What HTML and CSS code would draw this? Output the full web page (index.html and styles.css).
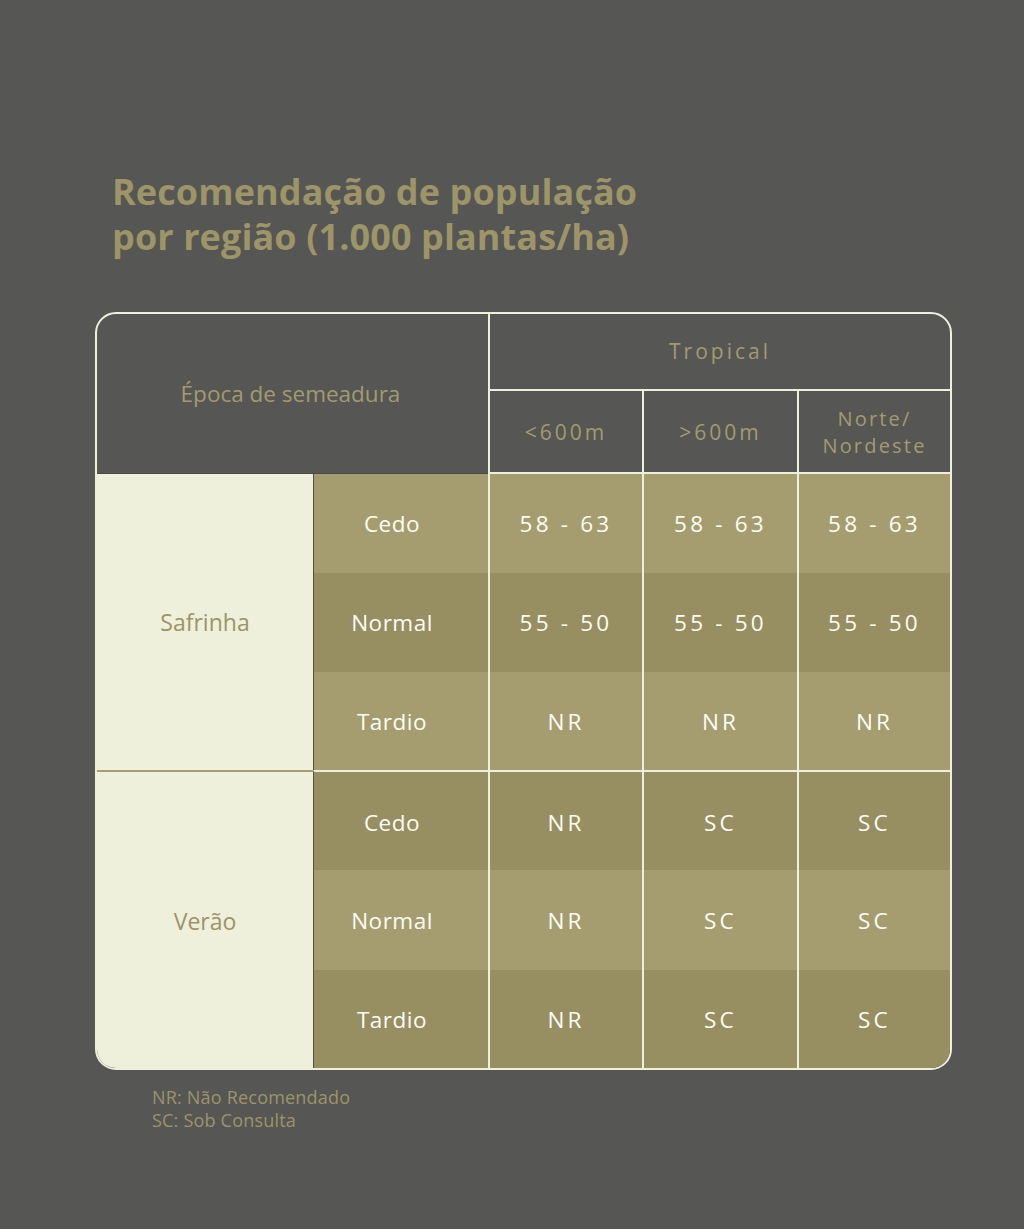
FILE: index.html
```html
<!DOCTYPE html>
<html lang="pt">
<head>
<meta charset="utf-8">
<title>Recomendação de população por região</title>
<link rel="stylesheet" href="styles.css">
</head>
<body>
<main class="page">
  <h1 class="title">Recomendação de população<br>por região (1.000 plantas/ha)</h1>

  <div class="table">
    <div class="hd hd-epoca">Época de semeadura</div>
    <div class="hd hd-trop">Tropical</div>
    <div class="hd hd-sub hd-c1">&lt;600m</div>
    <div class="hd hd-sub hd-c2">&gt;600m</div>
    <div class="hd hd-sub hd-c3"><span class="ln">Norte/</span><span class="ln">Nordeste</span></div>

    <div class="group g1">Safrinha</div>
    <div class="season light r1">Cedo</div>
    <div class="cell light r1">58 - 63</div>
    <div class="cell light r1">58 - 63</div>
    <div class="cell light r1">58 - 63</div>

    <div class="season dark r2">Normal</div>
    <div class="cell dark r2">55 - 50</div>
    <div class="cell dark r2">55 - 50</div>
    <div class="cell dark r2">55 - 50</div>

    <div class="season light r3">Tardio</div>
    <div class="cell light r3">NR</div>
    <div class="cell light r3">NR</div>
    <div class="cell light r3">NR</div>

    <div class="group g2">Verão</div>
    <div class="season dark r4 sep">Cedo</div>
    <div class="cell dark r4 sep">NR</div>
    <div class="cell dark r4 sep">SC</div>
    <div class="cell dark r4 sep">SC</div>

    <div class="season light r5">Normal</div>
    <div class="cell light r5">NR</div>
    <div class="cell light r5">SC</div>
    <div class="cell light r5">SC</div>

    <div class="season dark r6">Tardio</div>
    <div class="cell dark r6">NR</div>
    <div class="cell dark r6">SC</div>
    <div class="cell dark r6">SC</div>
  </div>

  <div class="legend">
    <p>NR: Não Recomendado</p>
    <p>SC: Sob Consulta</p>
  </div>
</main>
</body>
</html>
```

FILE: styles.css
```css
html, body {
  margin: 0;
  padding: 0;
  background: #565655;
}

.page {
  width: 1024px;
  height: 1229px;
  box-sizing: border-box;
  padding: 169px 0 0 95px;
  font-family: "Open Sans", "Lato", sans-serif;
}

.title {
  margin: 0 0 53px 17px;
  font-family: "Open Sans", sans-serif;
  font-weight: 700;
  font-size: 36px;
  line-height: 45px;
  color: #9d9467;
  letter-spacing: 0.1px;
}

.table {
  width: 857px;
  box-sizing: border-box;
  border: 2px solid #eef0dc;
  border-radius: 21px;
  overflow: hidden;
  display: grid;
  grid-template-columns: 216px 175px 154px 155px 153px;
  grid-template-rows: 77px 83px 99px 99px 98px 100px 100px 98px;
  background: #565655;
}

.hd {
  display: flex;
  align-items: center;
  justify-content: center;
  text-align: center;
  color: #a39b6d;
  font-size: 21px;
  letter-spacing: 1px;
}

.hd-epoca {
  grid-column: 1 / 3;
  grid-row: 1 / 3;
  font-size: 22.5px;
  letter-spacing: 0;
  padding-right: 4px;
  border-bottom: 1px solid #4a4a48;
}

.hd-trop {
  grid-column: 3 / 6;
  grid-row: 1;
  border-left: 2px solid #eef0dc;
  border-bottom: 2px solid #eef0dc;
  letter-spacing: 3px;
  padding-bottom: 2px;
}

.hd-sub {
  grid-row: 2;
  border-left: 2px solid #eef0dc;
  border-bottom: 2px solid #eef0dc;
  letter-spacing: 3px;
}

.hd-c3 {
  flex-direction: column;
  font-size: 20px;
  letter-spacing: 2.2px;
  line-height: 27.5px;
  padding-top: 1px;
}

.ln {
  display: block;
}

.group {
  grid-column: 1;
  display: flex;
  align-items: center;
  justify-content: center;
  background: #eef0db;
  color: #9d9467;
  font-size: 23px;
}

.g1 { grid-row: 3 / 6; }
.g2 {
  grid-row: 6 / 9;
  border-top: 2px solid #a59d6f;
  padding-top: 2px;
}

.season,
.cell {
  display: flex;
  align-items: center;
  justify-content: center;
  color: #fdfdf6;
  font-size: 22.5px;
  box-sizing: border-box;
}

.season {
  grid-column: 2;
  border-left: 1px solid #4f4f4c;
  padding-right: 18px;
  letter-spacing: 0.5px;
}

.cell {
  border-left: 2px solid #eef0dc;
  letter-spacing: 3.2px;
}

.light { background: #a59d6f; }
.dark { background: #978e62; }

.r1 { grid-row: 3; }
.r2 { grid-row: 4; }
.r3 { grid-row: 5; }
.r4 { grid-row: 6; }
.r5 { grid-row: 7; }
.r6 { grid-row: 8; }

.sep {
  border-top: 2px solid #eef0dc;
  padding-top: 2px;
}

.legend {
  margin: 16px 0 0 57px;
  color: #9d9467;
  font-size: 18px;
  line-height: 23px;
  letter-spacing: 0.2px;
}

.legend p {
  margin: 0;
}
```
